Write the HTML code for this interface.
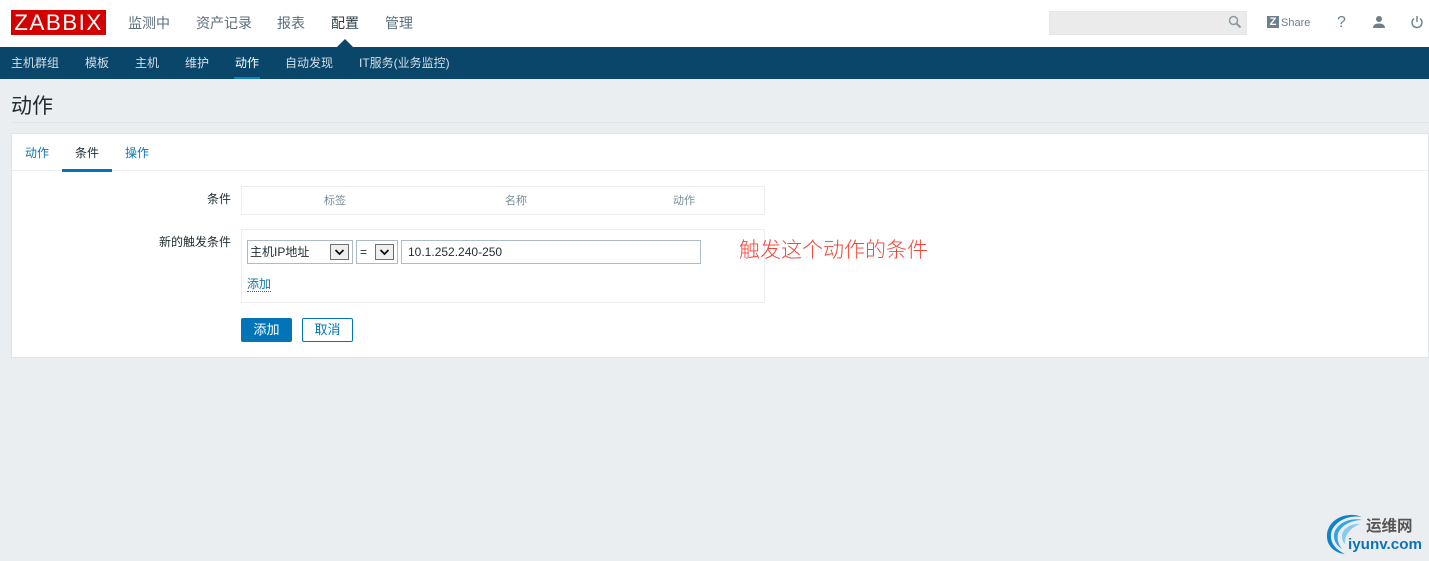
<!DOCTYPE html>
<html lang="zh">
<head>
<meta charset="utf-8">
<style>
html,body{margin:0;padding:0;width:1429px;height:561px;overflow:hidden;background:#ebeef0;font-family:"Liberation Sans","Noto Sans CJK SC",sans-serif;}
*{box-sizing:border-box;}
.a{position:absolute;white-space:nowrap;line-height:1;}
.top{font-size:14px;color:#5a6f7c;top:16px;}
.sub{font-size:12px;color:#d5dfe6;top:57px;}
.lab{font-size:12px;color:#1f2c33;}
.th{font-size:11px;color:#768d99;top:196px;}
.box{position:absolute;background:#fff;}
</style>
</head>
<body>
<div class="box" style="left:0;top:0;width:1429px;height:47px;"></div>
<div class="box" style="left:11px;top:10px;width:95px;height:25px;background:#d40000;"></div>
<div class="a" style="left:11px;top:10px;width:95px;height:25px;line-height:25px;text-align:center;color:#fff;font-size:22.500px;letter-spacing:1.400px;">ZABBIX</div>
<div class="a top" style="left:128px;">监测中</div>
<div class="a top" style="left:196px;">资产记录</div>
<div class="a top" style="left:277px;">报表</div>
<div class="a top" style="left:331px;color:#2f3f48;">配置</div>
<div class="a top" style="left:385px;">管理</div>
<div class="box" style="left:1049px;top:11px;width:198px;height:24px;background:#ebebeb;border:1px solid #e6e6e6;"></div>
<svg class="a" style="left:1227px;top:14px;" width="16" height="16" viewBox="0 0 16 16"><circle cx="6.500" cy="6.500" r="4" fill="none" stroke="#8b9ba5" stroke-width="1.500"/><path d="M9.500 9.500L13.500 13.500" stroke="#8b9ba5" stroke-width="2"/></svg>
<div class="box" style="left:1267px;top:16px;width:12px;height:12px;background:#6d7f8b;"></div>
<div class="a" style="left:1267px;top:16px;width:12px;height:12px;line-height:12px;text-align:center;font-size:11px;font-weight:bold;color:#fff;">Z</div>
<div class="a" style="left:1281px;top:17px;font-size:11px;line-height:12px;color:#6d7f8b;">Share</div>
<div class="a" style="left:1337px;top:15px;font-size:16px;color:#6d7f8b;">?</div>
<svg class="a" style="left:1371px;top:14px;" width="16" height="16" viewBox="0 0 16 16"><circle cx="8" cy="5" r="3" fill="#6d7f8b"/><path d="M2 14C2 10.500 5 9.500 8 9.500S14 10.500 14 14Z" fill="#6d7f8b"/></svg>
<svg class="a" style="left:1409px;top:14px;" width="16" height="16" viewBox="0 0 16 16"><path d="M5 4.500A5 5 0 1 0 11 4.500" fill="none" stroke="#6d7f8b" stroke-width="1.400"/><path d="M8 2V8" stroke="#6d7f8b" stroke-width="1.400"/></svg>

<div class="box" style="left:0;top:47px;width:1429px;height:32px;background:#0a466a;"></div>
<svg class="a" style="left:337px;top:39px;" width="16" height="8" viewBox="0 0 16 8"><path d="M0 8L8 0L16 8Z" fill="#0a466a"/></svg>
<div class="a sub" style="left:11px;">主机群组</div>
<div class="a sub" style="left:85px;">模板</div>
<div class="a sub" style="left:135px;">主机</div>
<div class="a sub" style="left:185px;">维护</div>
<div class="a sub" style="left:235px;color:#fff;">动作</div>
<div class="box" style="left:234px;top:77px;width:26px;height:2px;background:#0f7fc0;"></div>
<div class="a sub" style="left:285px;">自动发现</div>
<div class="a sub" style="left:359px;">IT服务(业务监控)</div>

<div class="a" style="left:11px;top:96px;font-size:21px;color:#1f2c33;">动作</div>
<div class="box" style="left:11px;top:122px;width:1418px;height:1px;background:#dfe4e7;"></div>

<div class="box" style="left:11px;top:133px;width:1418px;height:225px;border:1px solid #dfe4e7;"></div>
<div class="box" style="left:12px;top:170px;width:1416px;height:1px;background:#ebeef0;"></div>
<div class="a" style="left:25px;top:147px;font-size:12px;color:#0f75b3;">动作</div>
<div class="a" style="left:75px;top:147px;font-size:12px;color:#1f2c33;">条件</div>
<div class="box" style="left:62px;top:169px;width:50px;height:3px;background:#0275b8;"></div>
<div class="a" style="left:125px;top:147px;font-size:12px;color:#0f75b3;">操作</div>

<div class="a lab" style="left:207px;top:193px;">条件</div>
<div class="box" style="left:241px;top:186px;width:524px;height:29px;border:1px solid #ebeef0;"></div>
<div class="a th" style="left:324px;">标签</div>
<div class="a th" style="left:505px;">名称</div>
<div class="a th" style="left:673px;">动作</div>

<div class="a lab" style="left:159px;top:236px;">新的触发条件</div>
<div class="box" style="left:241px;top:229px;width:524px;height:74px;border:1px solid #ebeef0;"></div>

<div class="box" style="left:247px;top:240px;width:106px;height:24px;border:1px solid #acbbc4;"></div>
<div class="a" style="left:250px;top:246px;font-size:12px;color:#1f2c33;">主机IP地址</div>
<div class="box" style="left:330px;top:244px;width:19px;height:16px;background:#efefef;border:1px solid #6f6f6f;"></div>
<svg class="a" style="left:330px;top:244px;" width="19" height="16" viewBox="0 0 19 16"><path d="M5.500 6L9.500 10L13.500 6" fill="none" stroke="#111" stroke-width="1.800"/></svg>
<div class="box" style="left:356px;top:240px;width:42px;height:24px;border:1px solid #acbbc4;"></div>
<div class="a" style="left:360px;top:246px;font-size:12px;color:#1f2c33;">=</div>
<div class="box" style="left:375px;top:244px;width:19px;height:16px;background:#efefef;border:1px solid #6f6f6f;"></div>
<svg class="a" style="left:375px;top:244px;" width="19" height="16" viewBox="0 0 19 16"><path d="M5.500 6L9.500 10L13.500 6" fill="none" stroke="#111" stroke-width="1.800"/></svg>
<div class="box" style="left:401px;top:240px;width:300px;height:24px;border:1px solid #acbbc4;"></div>
<div class="a" style="left:408px;top:246px;font-size:12px;color:#1f2c33;">10.1.252.240-250</div>
<div class="a" style="left:247px;top:278px;font-size:12px;color:#0f75b3;border-bottom:1px dotted #0f75b3;padding-bottom:1px;">添加</div>

<div class="box" style="left:241px;top:318px;width:51px;height:24px;background:#0275b8;border-radius:2px;"></div>
<div class="a" style="left:241px;top:318px;width:51px;height:24px;line-height:24px;text-align:center;font-size:13px;color:#fff;">添加</div>
<div class="box" style="left:302px;top:318px;width:51px;height:24px;border:1px solid #0275b8;border-radius:2px;"></div>
<div class="a" style="left:302px;top:318px;width:51px;height:24px;line-height:24px;text-align:center;font-size:13px;color:#0275b8;">取消</div>

<div class="a" style="left:739px;top:240px;font-size:21px;font-weight:300;color:#f6463a;">触发这个动作的条件</div>

<svg class="a" style="left:1324px;top:512px;" width="44" height="46" viewBox="0 0 44 46"><path d="M38 5C24 -1 5 6 3 22C2 33 10 41 21 42C12 38 6 31 7 22C8 12 22 2 38 5Z" fill="#0f82c8"/><path d="M38 8C26 5 11 12 10 23C9.500 29 13 34 18 37C14 32 13 27 14 22C16 14 27 8 38 8Z" fill="#35a5e2"/><path d="M36 12C28 11 19 16 18 23C17.500 27 19 30 21 32C20 25 25 16 36 12Z" fill="#86cbee"/></svg>
<div class="a" style="left:1366px;top:519px;font-size:15.500px;color:#555;font-weight:bold;">运维网</div>
<div class="a" style="left:1348px;top:537px;font-size:15.200px;color:#0b73b7;font-weight:bold;">iyunv.com</div>
</body>
</html>
